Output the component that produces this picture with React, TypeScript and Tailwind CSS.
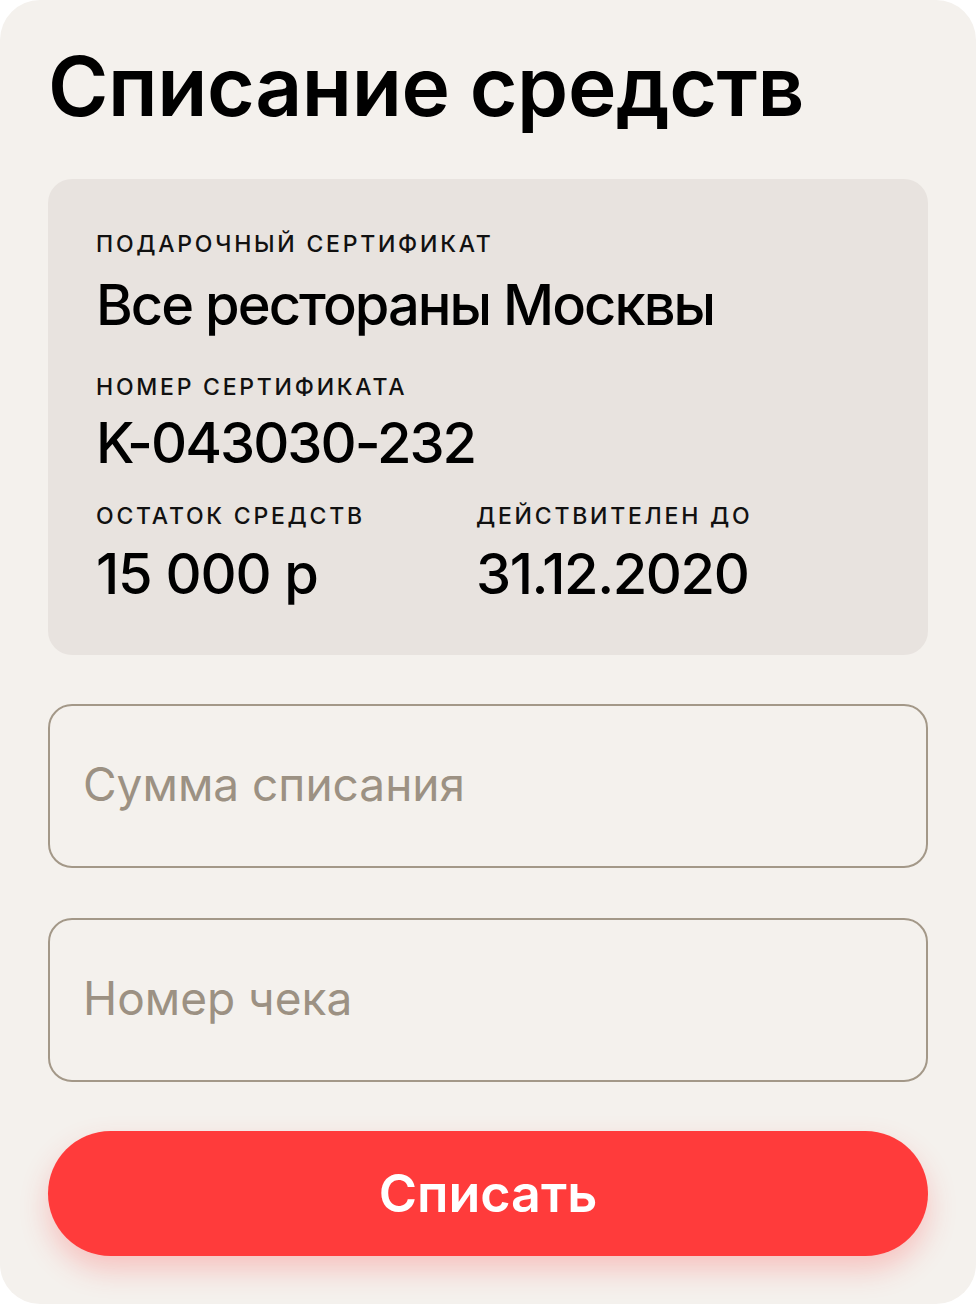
import React from "react";

const labelCls =
  "text-[23px] leading-none font-medium uppercase tracking-[0.12em] text-[#111]";

const valueCls = "text-[56px] leading-none font-medium text-black";

const CertificateCard = () => {
  return (
    <div className="mt-[51px] h-[476px] rounded-[24px] bg-[#e8e3df] pl-12 pt-[54px]">
      <div className={labelCls}>Подарочный сертификат</div>
      <div className={`mt-[21px] ${valueCls} tracking-[-0.035em]`}>
        Все рестораны Москвы
      </div>
      <div className={`mt-[43px] ${labelCls}`}>Номер сертификата</div>
      <div className={`mt-[16px] ${valueCls} tracking-[-0.035em]`}>K-043030-232</div>
      <div className="mt-[34px] flex">
        <div className="w-[380px]">
          <div className={labelCls}>Остаток средств</div>
          <div className={`mt-[18px] ${valueCls} tracking-[-0.02em]`}>
            15 000 р
          </div>
        </div>
        <div>
          <div className={labelCls}>Действителен до</div>
          <div className={`mt-[18px] ${valueCls} tracking-[-0.025em]`}>
            31.12.2020
          </div>
        </div>
      </div>
    </div>
  );
};

const Field = ({ placeholder, className = "" }: { placeholder: string; className?: string }) => (
  <input
    type="text"
    placeholder={placeholder}
    className={`block w-full h-[164px] rounded-[24px] border-2 border-[#a39888] bg-transparent pl-[33px] pb-[4px] text-[46px] text-black outline-none placeholder:text-[#9c9183] ${className}`}
  />
);

export default function App() {
  return (
    <div
      className="min-h-screen bg-white"
      style={{ fontFamily: "Inter, 'Noto Sans', sans-serif" }}>
      <div className="w-[976px] h-[1304px] rounded-[40px] bg-[#f4f1ed] px-12 pt-[46px]">
        <h1 className="text-[82px] leading-none font-semibold tracking-[-0.005em] text-black">
          Списание средств
        </h1>

        <CertificateCard />

        <Field placeholder="Сумма списания" className="mt-[49px]" />
        <Field placeholder="Номер чека" className="mt-[50px]" />

        <button
          type="button"
          className="mt-[49px] flex h-[125px] w-full items-center justify-center rounded-full bg-[#ff3b3b] text-[52px] font-semibold text-white shadow-[0_14px_28px_rgba(255,59,59,0.25)]">
          Списать
        </button>
      </div>
    </div>
  );
}
